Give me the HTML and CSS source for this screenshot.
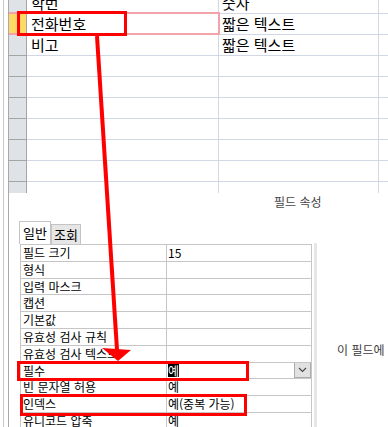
FILE: index.html
```html
<!DOCTYPE html>
<html lang="ko">
<head>
<meta charset="utf-8">
<title>테이블 디자인</title>
<link rel="stylesheet" href="styles.css">
</head>
<body>
<div class="window">
  <div class="frame">
    <div class="content">
      <div class="design">
        <div class="upper-grid">
          <div class="urow">
            <div class="sel"></div><div class="cell name">학번</div><div class="cell type">숫자</div><div class="cell desc"></div>
          </div>
          <div class="urow current">
            <div class="sel"></div><div class="cell name">전화번호</div><div class="cell type">짧은 텍스트</div><div class="cell desc"></div>
          </div>
          <div class="urow">
            <div class="sel"></div><div class="cell name">비고</div><div class="cell type">짧은 텍스트</div><div class="cell desc"></div>
          </div>
          <div class="urow"><div class="sel"></div><div class="cell name"></div><div class="cell type"></div><div class="cell desc"></div></div>
          <div class="urow"><div class="sel"></div><div class="cell name"></div><div class="cell type"></div><div class="cell desc"></div></div>
          <div class="urow"><div class="sel"></div><div class="cell name"></div><div class="cell type"></div><div class="cell desc"></div></div>
          <div class="urow"><div class="sel"></div><div class="cell name"></div><div class="cell type"></div><div class="cell desc"></div></div>
          <div class="urow"><div class="sel"></div><div class="cell name"></div><div class="cell type"></div><div class="cell desc"></div></div>
          <div class="urow"><div class="sel"></div><div class="cell name"></div><div class="cell type"></div><div class="cell desc"></div></div>
          <div class="urow"><div class="sel"></div><div class="cell name"></div><div class="cell type"></div><div class="cell desc"></div></div>
        </div>
        <div class="row-focus"></div>
      </div>
      <div class="lower">
        <div class="lower-head">필드 속성</div>
        <div class="lower-body">
          <div class="props">
            <div class="tabs">
              <div class="tab active">일반</div>
              <div class="tab">조회</div>
            </div>
            <div class="pgrid">
              <div class="prow"><div class="plabel">필드 크기</div><div class="pval">15</div></div>
              <div class="prow"><div class="plabel">형식</div><div class="pval"></div></div>
              <div class="prow"><div class="plabel">입력 마스크</div><div class="pval"></div></div>
              <div class="prow"><div class="plabel">캡션</div><div class="pval"></div></div>
              <div class="prow"><div class="plabel">기본값</div><div class="pval"></div></div>
              <div class="prow"><div class="plabel">유효성 검사 규칙</div><div class="pval"></div></div>
              <div class="prow"><div class="plabel">유효성 검사 텍스트</div><div class="pval"></div></div>
              <div class="prow"><div class="plabel">필수</div><div class="pval combo"><span class="hl">예</span><span class="drop"><svg width="9" height="6" viewBox="0 0 9 6"><path d="M1 1 L4.5 4.5 L8 1" fill="none" stroke="#444" stroke-width="1.1"/></svg></span></div></div>
              <div class="prow"><div class="plabel">빈 문자열 허용</div><div class="pval">예</div></div>
              <div class="prow"><div class="plabel">인덱스</div><div class="pval">예(중복 가능)</div></div>
              <div class="prow"><div class="plabel">유니코드 압축</div><div class="pval">예</div></div>
            </div>
          </div>
          <div class="sep"></div>
          <div class="help">이 필드에 데이터를 반드시 입력해야 합니까?</div>
        </div>
      </div>
    </div>
  </div>
</div>
<svg class="annot" width="388" height="427" viewBox="0 0 388 427">
  <rect x="18.5" y="12.5" width="107" height="22" fill="none" stroke="#ff0000" stroke-width="3"/>
  <rect x="18.5" y="362.5" width="229" height="17" fill="none" stroke="#ff0000" stroke-width="3"/>
  <rect x="21.5" y="395.5" width="224" height="19" fill="none" stroke="#ff0000" stroke-width="3"/>
  <line x1="97" y1="36" x2="117" y2="350" stroke="#ff0000" stroke-width="4"/>
  <polygon points="102,348 131,350 118,361" fill="#ff0000"/>
</svg>
</body>
</html>
```
FILE: styles.css
```css
html, body {
  margin: 0;
  padding: 0;
  background: #ffffff;
}
body {
  width: 388px;
  height: 427px;
  overflow: hidden;
  position: relative;
  font-family: "Noto Sans CJK KR", "Noto Sans", sans-serif;
  color: #000;
}
.window {
  height: 427px;
  padding-left: 3px;
}
.frame {
  height: 100%;
  border-left: 1px solid #c8c8c8;
  padding-left: 4px;
}
.content {
  height: 100%;
  border-left: 1px solid #a8a8a8;
  overflow: hidden;
}
.design {
  height: 193px;
  overflow: hidden;
  position: relative;
}
.upper-grid {
  margin-top: -7px;
}
.urow {
  display: grid;
  grid-template-columns: 18px 192px 160px 1fr;
  height: 20px;
  border-bottom: 1px solid #d0d7e5;
}
.sel {
  background: #dfe2e7;
  border-right: 1px solid #a5a5a5;
  border-bottom: 1px solid #a5a5a5;
  margin-bottom: -1px;
}
.current .sel {
  background: #ffd966;
}
.cell {
  font-size: 15px;
  line-height: 20px;
  padding-left: 4px;
  white-space: nowrap;
  overflow: hidden;
}
.name {
  border-right: 1px solid #d0d7e5;
}
.type {
  border-right: 1px solid #d0d7e5;
  padding-left: 3px;
}
.row-focus {
  position: absolute;
  left: -9px;
  top: 12px;
  width: 218px;
  height: 19px;
  border: 2px solid #f4a3aa;
  border-left: none;
}
.lower-head {
  height: 29px;
  padding-left: 265px;
  font-size: 12px;
  line-height: 17px;
  color: #444;
  box-sizing: border-box;
}
.lower-body {
  display: flex;
  align-items: flex-start;
}
.props {
  flex: 0 0 auto;
  padding-left: 10px;
  width: 293px;
}
.tabs {
  display: flex;
  align-items: flex-end;
  height: 22px;
}
.tab {
  font-size: 13px;
  line-height: 19px;
  height: 19px;
  padding: 0 2px;
  border: 1px solid #c4c4c4;
  border-bottom: none;
  background: #e6e6e6;
}
.tab.active {
  background: #fff;
  height: 22px;
  line-height: 22px;
  padding: 0 3px;
}
.pgrid {
  margin-left: 1px;
  border: 1px solid #c6c6c6;
  border-bottom: none;
}
.prow {
  display: grid;
  grid-template-columns: 146px 1fr;
  height: 15.8px;
  border-bottom: 1px solid #c6c6c6;
}
.plabel, .pval {
  font-size: 12px;
  line-height: 16px;
  padding-left: 2px;
  white-space: nowrap;
  overflow: hidden;
}
.plabel {
  border-right: 1px solid #c6c6c6;
}
.pval {
  padding-left: 1px;
}
.combo {
  display: flex;
  align-items: center;
  justify-content: space-between;
}
.hl {
  background: #000;
  color: #fff;
  line-height: 13px;
  height: 13px;
  display: inline-block;
}
.drop {
  width: 15px;
  height: 14px;
  background: #e1e1e1;
  border: 1px solid #adadad;
  display: flex;
  align-items: center;
  justify-content: center;
}
.sep {
  flex: 0 0 3px;
  margin-left: 2px;
  margin-top: 21px;
  height: 190px;
  background: #e6e6e6;
}
.help {
  flex: 1 1 auto;
  min-width: 0;
  overflow: hidden;
  margin-top: 121px;
  padding-left: 20px;
  font-size: 12px;
  line-height: 14px;
  white-space: nowrap;
  color: #3c3c3c;
}
.annot {
  position: absolute;
  left: 0;
  top: 0;
  pointer-events: none;
}
```
